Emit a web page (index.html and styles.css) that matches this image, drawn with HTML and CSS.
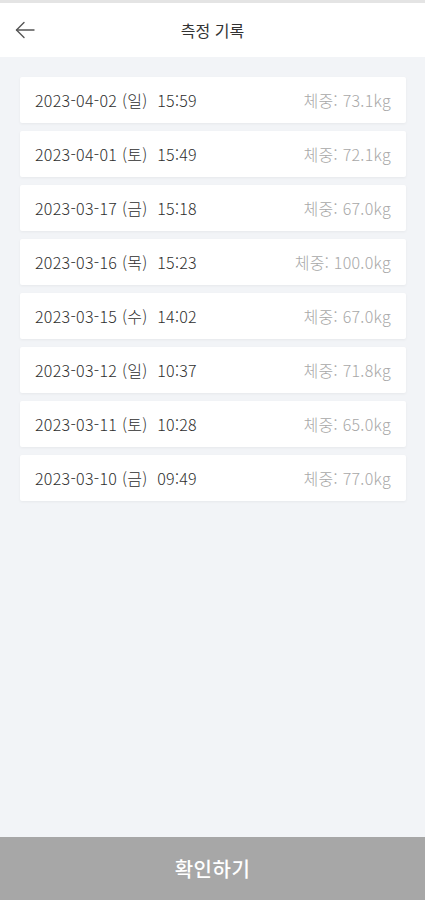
FILE: index.html
```html
<!DOCTYPE html>
<html lang="ko">
<head>
    <meta charset="UTF-8">
    <meta name="viewport" content="width=device-width, initial-scale=1.0">
    <title>측정 기록</title>
    <link rel="stylesheet" href="styles.css">
</head>
<body>
    <div class="page">
        <header class="header">
            <button class="back-btn" type="button" aria-label="뒤로">
                <svg width="20" height="18" viewBox="0 0 20 18" fill="none" stroke="#555" stroke-width="1.4" stroke-linecap="round" stroke-linejoin="round">
                    <path d="M19 9H1.5"/>
                    <path d="M9 1.5L1.5 9L9 16.5"/>
                </svg>
            </button>
            <h1 class="title">측정 기록</h1>
        </header>

        <ul class="record-list">
            <li class="record"><span class="date">2023-04-02 (일) &nbsp;15:59</span><span class="weight">체중: 73.1kg</span></li>
            <li class="record"><span class="date">2023-04-01 (토) &nbsp;15:49</span><span class="weight">체중: 72.1kg</span></li>
            <li class="record"><span class="date">2023-03-17 (금) &nbsp;15:18</span><span class="weight">체중: 67.0kg</span></li>
            <li class="record"><span class="date">2023-03-16 (목) &nbsp;15:23</span><span class="weight">체중: 100.0kg</span></li>
            <li class="record"><span class="date">2023-03-15 (수) &nbsp;14:02</span><span class="weight">체중: 67.0kg</span></li>
            <li class="record"><span class="date">2023-03-12 (일) &nbsp;10:37</span><span class="weight">체중: 71.8kg</span></li>
            <li class="record"><span class="date">2023-03-11 (토) &nbsp;10:28</span><span class="weight">체중: 65.0kg</span></li>
            <li class="record"><span class="date">2023-03-10 (금) &nbsp;09:49</span><span class="weight">체중: 77.0kg</span></li>
        </ul>

        <button class="confirm-btn" type="button">확인하기</button>
    </div>
</body>
</html>
```

FILE: styles.css
```css
* {
    margin: 0;
    padding: 0;
    box-sizing: border-box;
    font-family: 'Noto Sans CJK KR', 'Noto Sans', sans-serif;
}

html, body {
    height: 100%;
}

body {
    background: #f2f4f7;
}

.page {
    height: 900px;
    display: flex;
    flex-direction: column;
    border-top: 3px solid #e4e4e4;
}

.header {
    height: 54px;
    background: #ffffff;
    display: flex;
    align-items: center;
    justify-content: center;
    position: relative;
}

.back-btn {
    position: absolute;
    left: 15px;
    top: 18px;
    background: none;
    border: none;
    display: flex;
}

.title {
    font-size: 16px;
    font-weight: 400;
    color: #333;
}

.record-list {
    list-style: none;
    flex: 1;
    padding: 20px 19px 0 20px;
    display: flex;
    flex-direction: column;
    gap: 8px;
}

.record {
    height: 46px;
    background: #ffffff;
    border-radius: 2px;
    box-shadow: 0 1px 3px rgba(0, 0, 0, 0.05);
    display: flex;
    align-items: center;
    justify-content: space-between;
    padding: 0 15px 0 15px;
    font-size: 16px;
    font-weight: 300;
    letter-spacing: 0.3px;
}

.date {
    color: #2e2e2e;
}

.weight {
    color: #a8a8a8;
}

.confirm-btn {
    height: 63px;
    border: none;
    background: #a7a7a7;
    color: #ffffff;
    font-size: 20px;
    font-weight: 500;
    letter-spacing: 0.5px;
}
```
